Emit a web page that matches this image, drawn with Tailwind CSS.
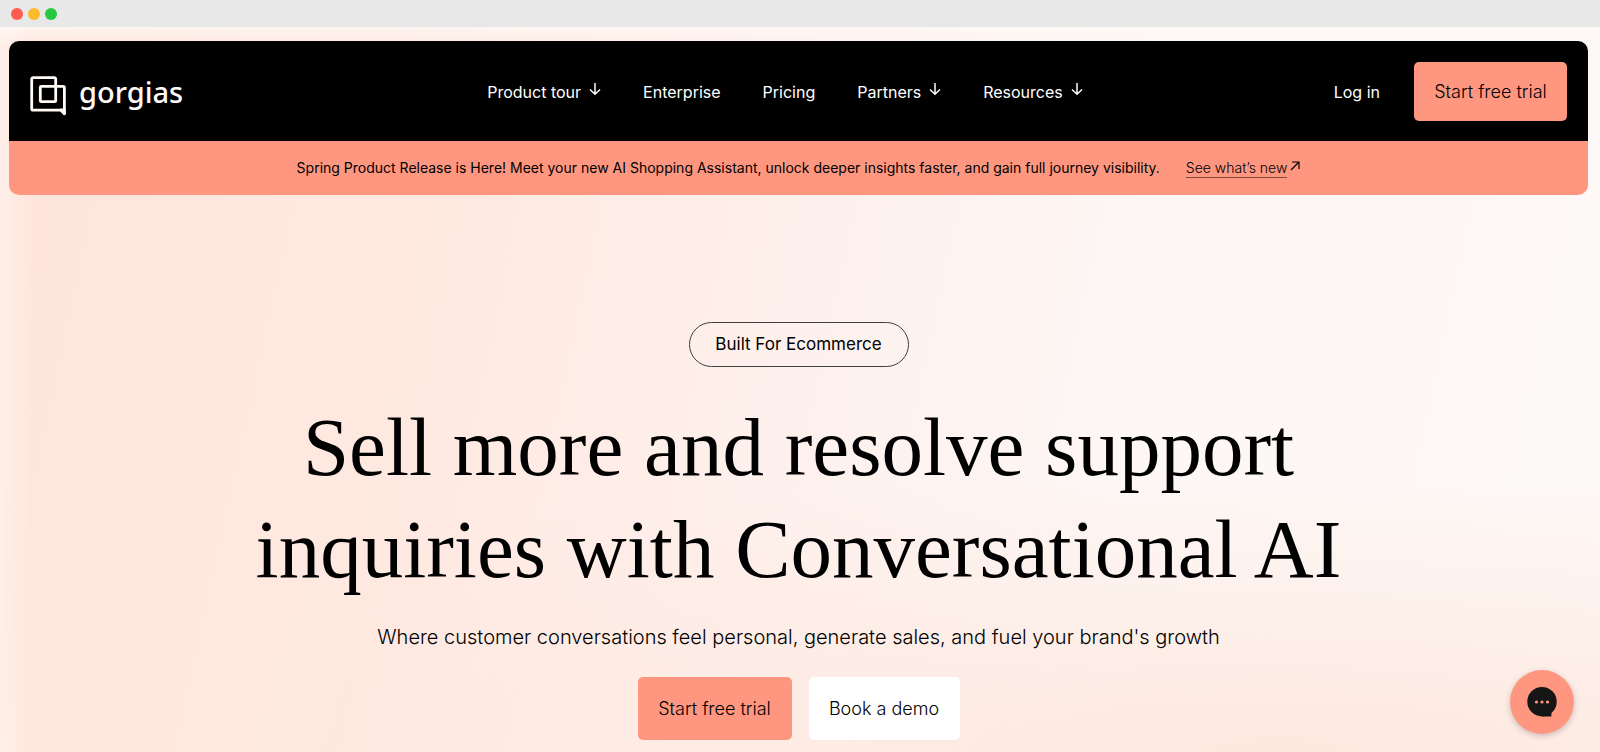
<!DOCTYPE html>
<html lang="en">
<head>
<meta charset="utf-8">
<meta name="viewport" content="width=device-width, initial-scale=1">
<title>Gorgias</title>
<script src="https://cdn.jsdelivr.net/npm/@tailwindcss/browser@4"></script>
</head>
<body class="min-h-screen flex flex-col bg-[#fef4f0] font-['Inter','Liberation_Sans',sans-serif] text-black">
  <div class="flex h-[27px] shrink-0 items-center gap-[5px] bg-[#e8e8e8] pt-px pl-[11px]">
    <span class="size-3 rounded-full bg-[#fe5b53]"></span>
    <span class="size-3 rounded-full bg-[#fdbb2c]"></span>
    <span class="size-3 rounded-full bg-[#26c840]"></span>
  </div>

  <div class="flex grow flex-col bg-[linear-gradient(to_bottom,rgba(255,250,248,0.7),transparent_20px),linear-gradient(to_right,rgba(255,246,242,0.6),transparent_32px),radial-gradient(ellipse_90%_38%_at_80%_100%,#fde8df_0%,rgba(253,232,223,0)_100%),linear-gradient(102deg,#ffe5db_0%,#fee9e1_28%,#fef0ec_48%,#fdf7f5_70%,#fdf9f7_100%)] pt-3.5 pr-3 pb-3 pl-[9px]">
    <header class="overflow-hidden rounded-[10px]">
      <div class="grid h-[100px] grid-cols-[1fr_auto_1fr] items-center bg-black px-[21px] pt-px text-white">
        <a href="#" aria-label="gorgias" class="flex items-center gap-3 text-[#fffaf5]">
          <svg class="mt-2 h-10 w-[37px]" viewBox="0 0 37 40" fill="none" stroke="currentColor" stroke-width="2.8" stroke-linejoin="round">
            <rect x="10.3" y="10.3" width="15.4" height="15.4" rx="1"/>
            <path d="M25.7 10.3V3.1a1.4 1.4 0 0 0-1.4-1.4H3.1a1.4 1.4 0 0 0-1.4 1.4v29.6a1.4 1.4 0 0 0 1.4 1.4H31l3.4 3.6V11.7a1.4 1.4 0 0 0-1.4-1.4h-7.3"/>
            <path d="M31 34l3.4 3.6V34z" fill="currentColor"/>
          </svg>
          <span class="font-['Noto_Sans','Liberation_Sans',sans-serif] text-[29px] leading-10 font-medium">gorgias</span>
        </a>
        <nav class="mr-[27px] flex items-center gap-[42px] text-base leading-6">
          <button class="flex items-center gap-2">Product tour
            <svg class="mb-1.5 h-3 w-3" viewBox="0 0 12 12" fill="none" stroke="currentColor" stroke-width="1.5"><path d="M6 0v11M1 6.5l5 4.7 5-4.7"/></svg></button>
          <a href="#">Enterprise</a>
          <a href="#">Pricing</a>
          <button class="flex items-center gap-2">Partners
            <svg class="mb-1.5 h-3 w-3" viewBox="0 0 12 12" fill="none" stroke="currentColor" stroke-width="1.5"><path d="M6 0v11M1 6.5l5 4.7 5-4.7"/></svg></button>
          <button class="flex items-center gap-2">Resources
            <svg class="mb-1.5 h-3 w-3" viewBox="0 0 12 12" fill="none" stroke="currentColor" stroke-width="1.5"><path d="M6 0v11M1 6.5l5 4.7 5-4.7"/></svg></button>
        </nav>
        <div class="flex items-center justify-end gap-[34px]">
          <a href="#" class="text-base leading-6">Log in</a>
          <a href="#" class="flex h-[59px] w-[153px] items-center justify-center rounded-[5px] bg-[#ff9780] text-lg font-light text-black">Start free trial</a>
        </div>
      </div>
      <div class="flex h-[54px] items-center justify-center gap-[26px] bg-[#ff9780] text-sm leading-5">
        <p>Spring Product Release is Here! Meet your new AI Shopping Assistant, unlock deeper insights faster, and gain full journey visibility.</p>
        <a href="#" class="flex items-center gap-[3px] font-light"><span class="border-b border-black/50 leading-[18px]">See what’s new</span>
          <svg class="mb-1 h-2.5 w-2.5" viewBox="0 0 10 10" fill="none" stroke="currentColor" stroke-width="1.2"><path d="M1 9l8-8M2 1h7v7"/></svg></a>
      </div>
    </header>

    <main class="flex flex-col items-center pt-[127px] text-center">
      <p class="flex h-[45px] w-[220px] items-center justify-center rounded-full border border-neutral-700 text-[17px]">Built For Ecommerce</p>
      <h1 class="mt-[29px] font-['Liberation_Serif',serif] text-[83px] leading-[102px]">Sell more and resolve support<br>inquiries with Conversational AI</h1>
      <p class="mt-[21px] text-xl leading-8 font-light">Where customer conversations feel personal, generate sales, and fuel your brand's growth</p>
      <div class="mt-6 flex gap-[17px] text-lg font-light">
        <a href="#" class="flex h-[63px] w-[154px] items-center justify-center rounded-[5px] bg-[#ff9780]">Start free trial</a>
        <a href="#" class="flex h-[63px] w-[151px] items-center justify-center rounded-[5px] bg-white">Book a demo</a>
      </div>
    </main>
  </div>

  <button aria-label="Open chat" class="fixed right-[26px] bottom-[18px] flex size-16 items-center justify-center rounded-full bg-[#ff9780] shadow-[0_2px_6px_rgba(0,0,0,0.2)]">
    <svg class="size-[30px]" viewBox="0 0 30 30"><circle cx="15" cy="14.7" r="14.7" fill="#161616"/><path d="M15 29.4h9.4V22z" fill="#161616"/><g fill="#ff9780"><circle cx="9.5" cy="15" r="1.6"/><circle cx="15" cy="15" r="1.6"/><circle cx="20.5" cy="15" r="1.6"/></g></svg>
  </button>
</body>
</html>
